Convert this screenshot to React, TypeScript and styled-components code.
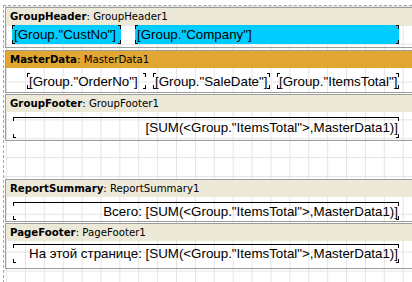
import styled, { createGlobalStyle } from "styled-components";

const GlobalStyle = createGlobalStyle`
	html, body {
		margin: 0;
		padding: 0;
		background: #fff;
		overflow: hidden;
	}
	body {
		font-family: "DejaVu Sans", Verdana, sans-serif;
	}
`;

const lineColor = "#9c9c9c";
const gridColor = "#e4e4e4";

const Page = styled.div`
	display: flex;
	flex-direction: column;
	margin: 5px 0 0 3px;
	padding: 1px 0 0 1px;
	min-height: calc(100vh - 6px);
	border-top: 1px dashed #a8a8a8;
	border-left: 1px dashed #a8a8a8;
	background-image:
		linear-gradient(to right, ${gridColor} 1px, transparent 1px),
		linear-gradient(to bottom, ${gridColor} 1px, transparent 1px);
	background-size: 18.9px 18.9px;
	background-position: 2px 0;
`;

const Band = styled.section<{ $gap: number }>`
	display: flex;
	flex-direction: column;
	margin-top: ${(p) => p.$gap}px;
	border-top: 1px solid ${lineColor};
	border-bottom: 1px solid ${lineColor};
	border-left: 1px solid ${lineColor};
`;

const BandHeader = styled.div<{ $color: string }>`
	display: flex;
	align-items: center;
	height: 17px;
	padding-left: 4px;
	background: ${(p) => p.$color};
	font-size: 10.2px;
	color: #000;
	white-space: nowrap;

	b {
		font-weight: 700;
	}
`;

const BandBody = styled.div<{ $height: number; $top: number; $left: number; $gap?: number }>`
	display: flex;
	align-items: flex-start;
	gap: ${(p) => p.$gap ?? 0}px;
	height: ${(p) => p.$height}px;
	padding: ${(p) => p.$top}px 0 0 ${(p) => p.$left}px;
	box-sizing: border-box;
`;

const mark = "linear-gradient(#000, #000)";

const Field = styled.div<{ $width: number; $height: number; $fill?: string; $topLine?: boolean; $right?: boolean }>`
	display: flex;
	align-items: center;
	justify-content: ${(p) => (p.$right ? "flex-end" : "flex-start")};
	flex: none;
	width: ${(p) => p.$width}px;
	height: ${(p) => p.$height}px;
	box-sizing: border-box;
	padding: 0 1px 0 2px;
	overflow: hidden;
	white-space: nowrap;
	font-family: "Liberation Sans", Arial, sans-serif;
	font-size: 13.33px;
	color: #000;
	background:
		${(p) => (p.$topLine ? `${mark} left top / 100% 1px no-repeat,` : "")}
		${mark} left top / 3px 1px no-repeat,
		${mark} left top / 1px 4px no-repeat,
		${mark} right top / 3px 1px no-repeat,
		${mark} right top / 1px 4px no-repeat,
		${mark} left bottom / 3px 1px no-repeat,
		${mark} left bottom / 1px 4px no-repeat,
		${mark} right bottom / 3px 1px no-repeat,
		${mark} right bottom / 1px 4px no-repeat,
		${(p) => p.$fill ?? "transparent"};
`;

const beige = "#ece9d8";
const orange = "#e2a732";
const sum = `[SUM(<Group."ItemsTotal">,MasterData1)]`;

export default function App() {
	return (
		<>
			<GlobalStyle />
			<Page>
				<Band $gap={0}>
					<BandHeader $color={beige}><b>GroupHeader</b>: GroupHeader1</BandHeader>
					<BandBody $height={22} $top={0} $left={6} $gap={14}>
						<Field $width={109} $height={19} $fill="#00ccff">[Group."CustNo"]</Field>
						<Field $width={264} $height={19} $fill="#00ccff">[Group."Company"]</Field>
					</BandBody>
				</Band>

				<Band $gap={2}>
					<BandHeader $color={orange}><b>MasterData</b>: MasterData1</BandHeader>
					<BandBody $height={24} $top={5} $left={21} $gap={7}>
						<Field $width={119} $height={16}>[Group."OrderNo"]</Field>
						<Field $width={117} $height={16}>[Group."SaleDate"]</Field>
						<Field $width={122} $height={16}>[Group."ItemsTotal"]</Field>
					</BandBody>
				</Band>

				<Band $gap={1}>
					<BandHeader $color={beige}><b>GroupFooter</b>: GroupFooter1</BandHeader>
					<BandBody $height={28} $top={5} $left={7}>
						<Field $width={386} $height={21} $topLine $right>{sum}</Field>
					</BandBody>
				</Band>

				<Band $gap={38}>
					<BandHeader $color={beige}><b>ReportSummary</b>: ReportSummary1</BandHeader>
					<BandBody $height={24} $top={5} $left={7}>
						<Field $width={386} $height={18} $topLine $right>Всего: {sum}</Field>
					</BandBody>
				</Band>

				<Band $gap={1}>
					<BandHeader $color={beige}><b>PageFooter</b>: PageFooter1</BandHeader>
					<BandBody $height={27} $top={3} $left={7}>
						<Field $width={386} $height={19} $topLine $right>На этой странице: {sum}</Field>
					</BandBody>
				</Band>
			</Page>
		</>
	);
}
